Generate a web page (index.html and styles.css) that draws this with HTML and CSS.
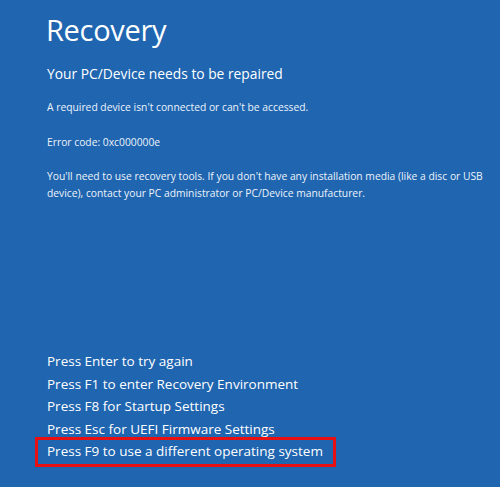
FILE: index.html
```html
<!DOCTYPE html>
<html>
<head>
<meta charset="utf-8">
<link rel="stylesheet" href="styles.css">
</head>
<body>
<main class="screen">
  <section class="top">
    <h1 class="title">Recovery</h1>
    <h2 class="subtitle">Your PC/Device needs to be repaired</h2>
    <p class="msg">A required device isn't connected or can't be accessed.</p>
    <p class="msg code">Error code: 0xc000000e</p>
    <p class="msg para">You'll need to use recovery tools. If you don't have any installation media (like a disc or USB device), contact your PC administrator or PC/Device manufacturer.</p>
  </section>
  <ul class="options">
    <li>Press Enter to try again</li>
    <li>Press F1 to enter Recovery Environment</li>
    <li>Press F8 for Startup Settings</li>
    <li>Press Esc for UEFI Firmware Settings</li>
    <li class="highlight">Press F9 to use a different operating system</li>
  </ul>
</main>
</body>
</html>
```

FILE: styles.css
```css
html, body {
  margin: 0;
  padding: 0;
}
body {
  background: #1f65b0;
  width: 500px;
  height: 487px;
  overflow: hidden;
  font-family: "Open Sans", "Noto Sans", sans-serif;
  color: #ffffff;
}
.screen {
  display: flex;
  flex-direction: column;
  height: 487px;
  padding-left: 46px;
  box-sizing: border-box;
}
.top {
  padding-top: 10px;
}
.title {
  margin: 0;
  font-weight: 400;
  font-size: 29px;
  line-height: 40px;
  letter-spacing: -0.3px;
}
.subtitle {
  margin: 14px 0 0 1px;
  font-weight: 400;
  font-size: 13.8px;
  line-height: 20px;
}
.msg {
  margin: 15px 0 0 1px;
  font-size: 10.3px;
  line-height: 16.5px;
  color: #eef3fa;
}
.code {
  margin-top: 18px;
}
.para {
  margin-top: 18px;
  width: 445px;
}
.options {
  list-style: none;
  margin: auto 0 0 0;
  padding: 0 0 24px 0;
}
.options li {
  font-size: 13.5px;
  line-height: 22.6px;
  padding-left: 1px;
}
.highlight {
  position: relative;
  width: max-content;
}
.highlight::after {
  content: "";
  position: absolute;
  left: -11px;
  right: -13px;
  top: -3px;
  bottom: -4px;
  border: 3px solid #e81010;
}
```
